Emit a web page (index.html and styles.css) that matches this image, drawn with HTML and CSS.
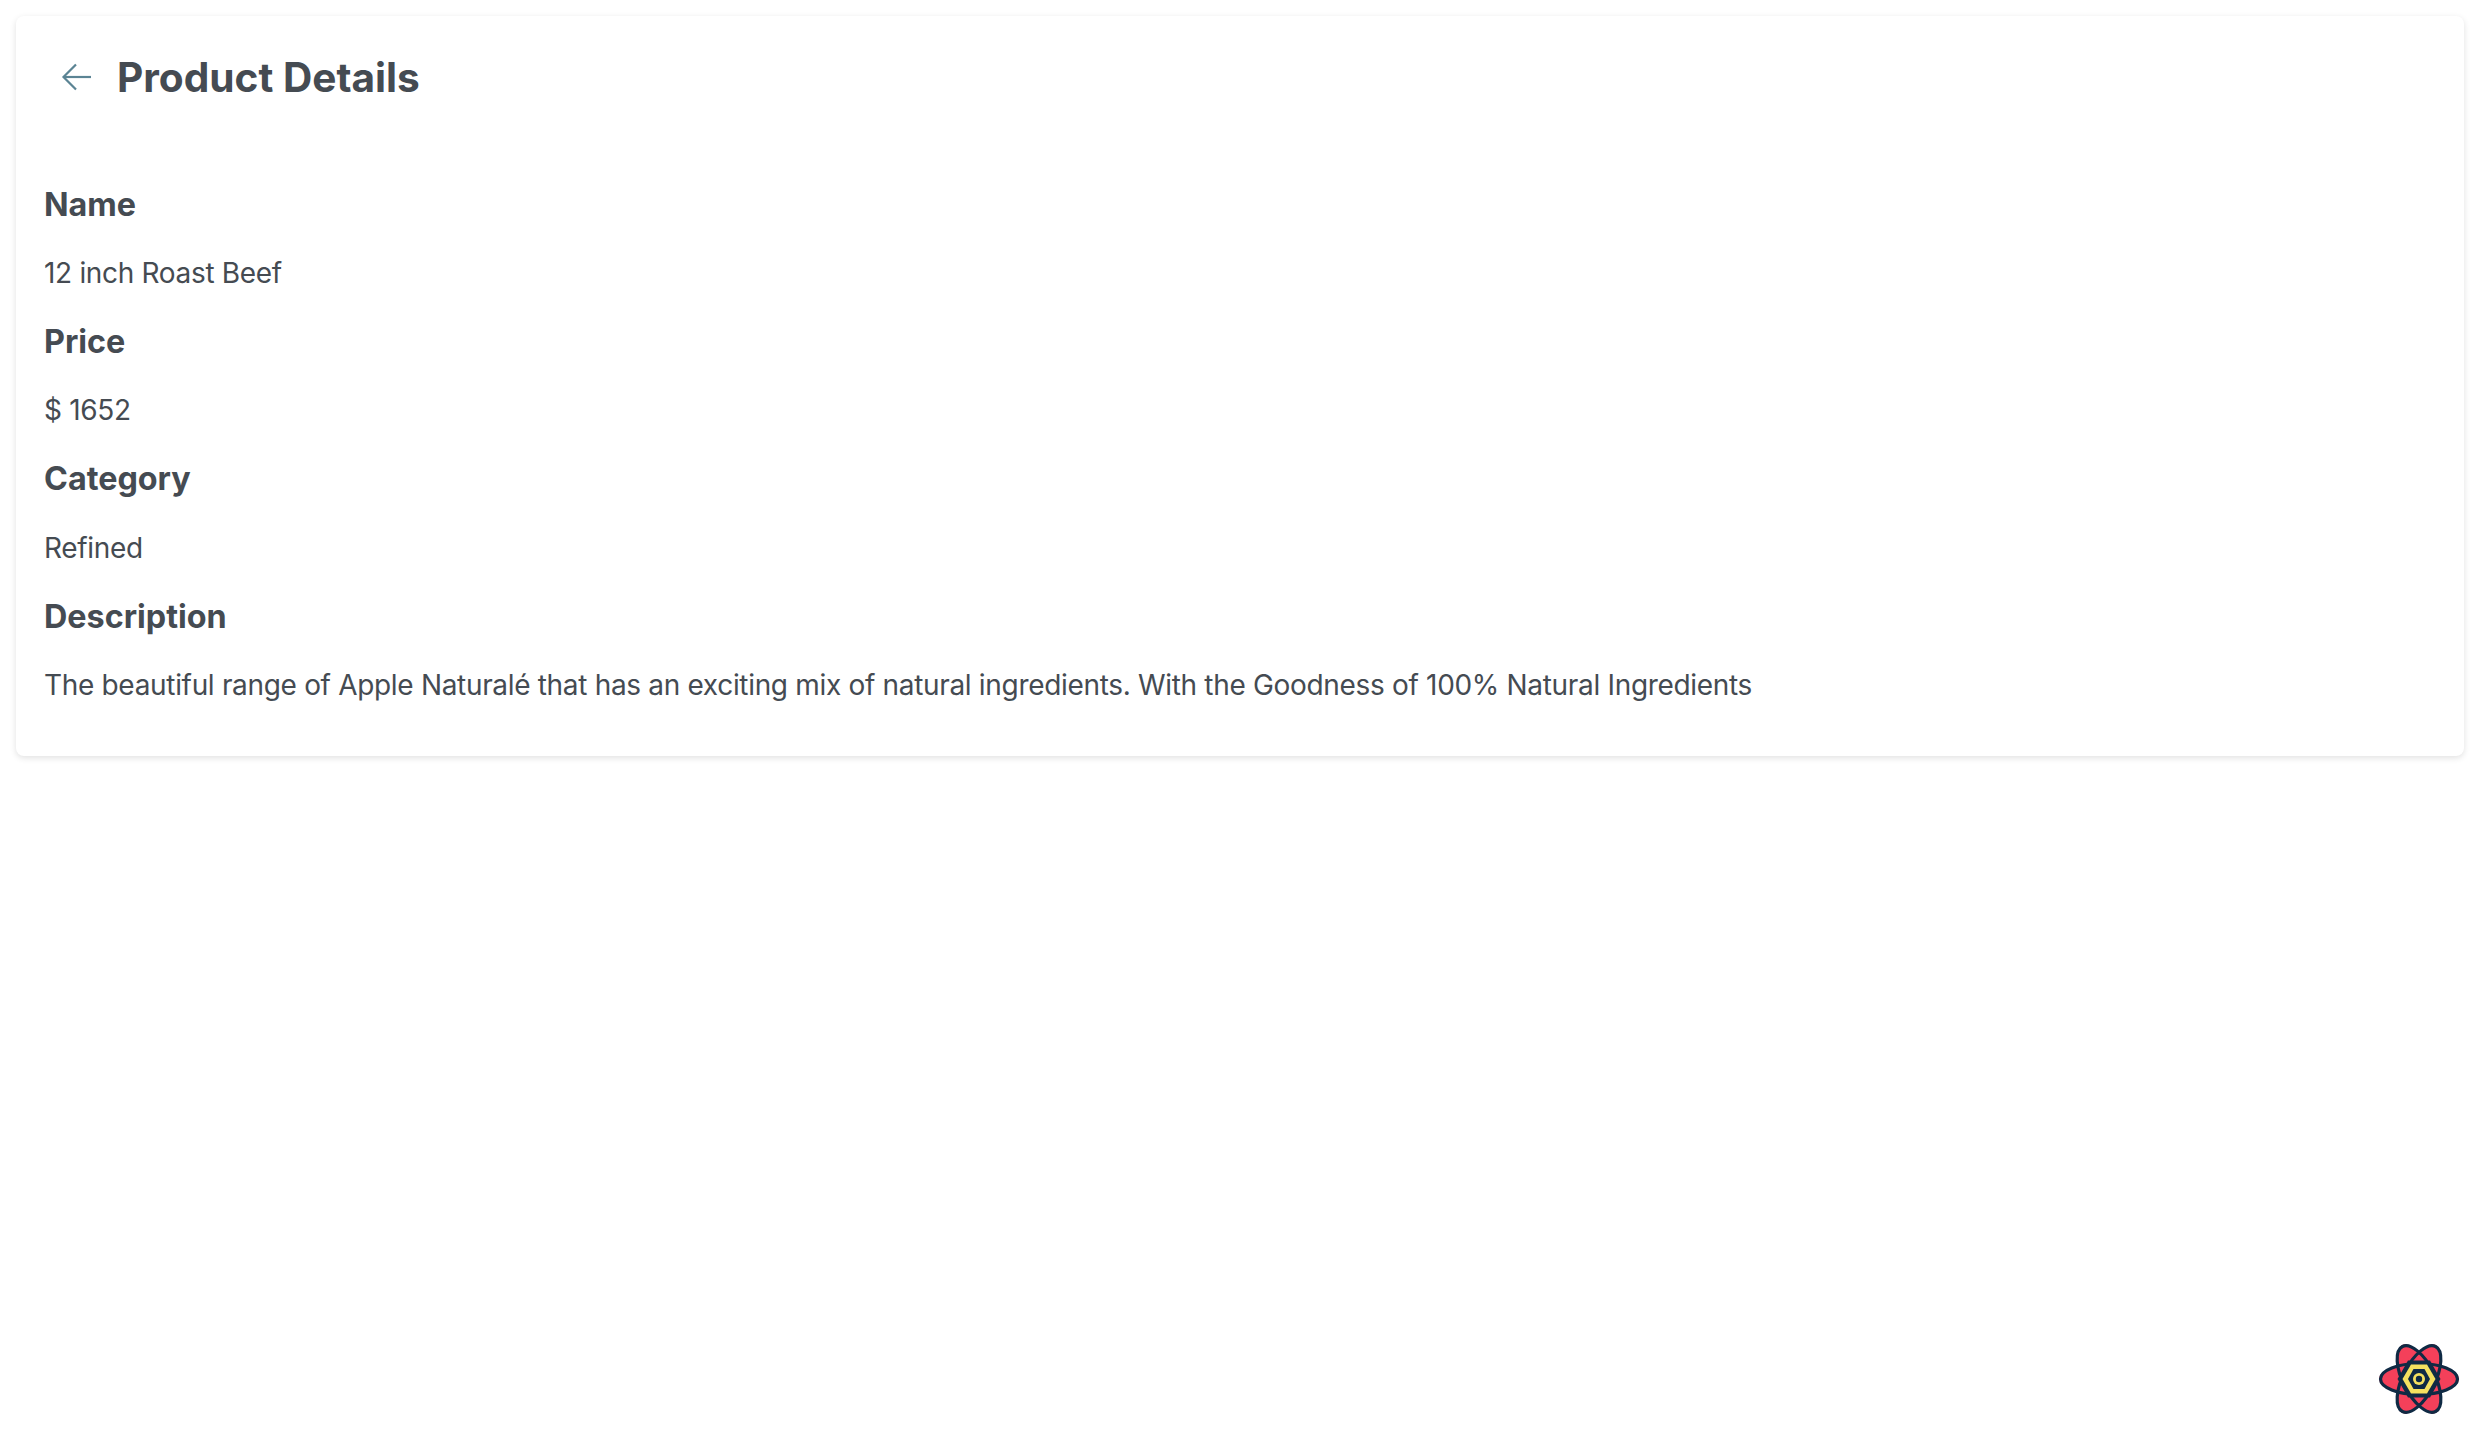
FILE: index.html
```html
<!DOCTYPE html>
<html lang="en">
<head>
    <meta charset="UTF-8">
    <meta name="viewport" content="width=device-width, initial-scale=1.0">
    <title>Product Details</title>
    <link rel="stylesheet" href="styles.css">
</head>
<body>
    <div class="details-card">
        <div class="page-header">
            <button class="back-button" aria-label="Back">
                <svg width="32" height="32" viewBox="0 0 32 32" fill="none" stroke="currentColor" stroke-width="2.2">
                    <path d="M30 15H3"/>
                    <path d="M15 2.5L2.5 15L15 27.5"/>
                </svg>
            </button>
            <h1 class="page-title">Product Details</h1>
        </div>

        <div class="field-list">
            <h2 class="field-label">Name</h2>
            <p class="field-value">12 inch Roast Beef</p>
            <h2 class="field-label">Price</h2>
            <p class="field-value">$ 1652</p>
            <h2 class="field-label">Category</h2>
            <p class="field-value">Refined</p>
            <h2 class="field-label">Description</h2>
            <p class="field-value">The beautiful range of Apple Naturalé that has an exciting mix of natural ingredients. With the Goodness of 100% Natural Ingredients</p>
        </div>
    </div>

    <!-- query devtools toggle -->
    <button class="devtools-toggle" aria-label="Open devtools">
        <svg width="84" height="76" viewBox="-42 -38 84 76">
            <g fill="#f4405a">
                <ellipse rx="16" ry="38" transform="rotate(-27)"/>
                <ellipse rx="16" ry="38" transform="rotate(27)"/>
                <ellipse rx="40" ry="15.5"/>
            </g>
            <g fill="none" stroke="#0f2a44" stroke-width="3.2">
                <ellipse rx="16" ry="36.5" transform="rotate(-27)"/>
                <ellipse rx="16" ry="36.5" transform="rotate(27)"/>
                <ellipse rx="38.5" ry="15.5"/>
            </g>
            <path d="M-11 -18.5H11L21.5 0L11 18.5H-11L-21.5 0Z" fill="#0f2a44"/>
            <path d="M-8 -14.5H8L16.5 0L8 14.5H-8L-16.5 0Z" fill="#f4e15f"/>
            <path d="M-5.5 -10H5.5L11 0L5.5 10H-5.5L-11 0Z" fill="#0f2a44"/>
            <circle r="6" fill="#f4e15f"/>
            <circle r="3.2" fill="#0f2a44"/>
        </svg>
    </button>
</body>
</html>
```

FILE: styles.css
```css
* {
    margin: 0;
    padding: 0;
    box-sizing: border-box;
}

body {
    font-family: Inter, 'Liberation Sans', sans-serif;
    color: #454b52;
    background: #fff;
    min-height: 100vh;
    padding: 16px;
}

.details-card {
    background: #fff;
    border-radius: 8px;
    box-shadow: 0 2px 6px rgba(0,0,0,0.12);
    padding: 28px 28px 51px;
}

.page-header {
    display: flex;
    align-items: center;
    gap: 24px;
    padding-left: 17px;
    margin-bottom: 72.5px;
}

.back-button {
    display: flex;
    border: none;
    background: none;
    color: #5b8494;
    cursor: pointer;
}

.page-title {
    font-size: 40.6px;
    line-height: 68px;
    font-weight: 700;
}

.field-label {
    font-size: 32.3px;
    line-height: 40px;
    font-weight: 700;
    margin-bottom: 28.4px;
}

.field-value {
    font-size: 28px;
    line-height: 40px;
    letter-spacing: -0.32px;
    margin-bottom: 29px;
}

.field-value:last-child {
    margin-bottom: 0;
}

.devtools-toggle {
    position: fixed;
    right: 19px;
    bottom: 23px;
    border: none;
    background: none;
    display: flex;
}
```
